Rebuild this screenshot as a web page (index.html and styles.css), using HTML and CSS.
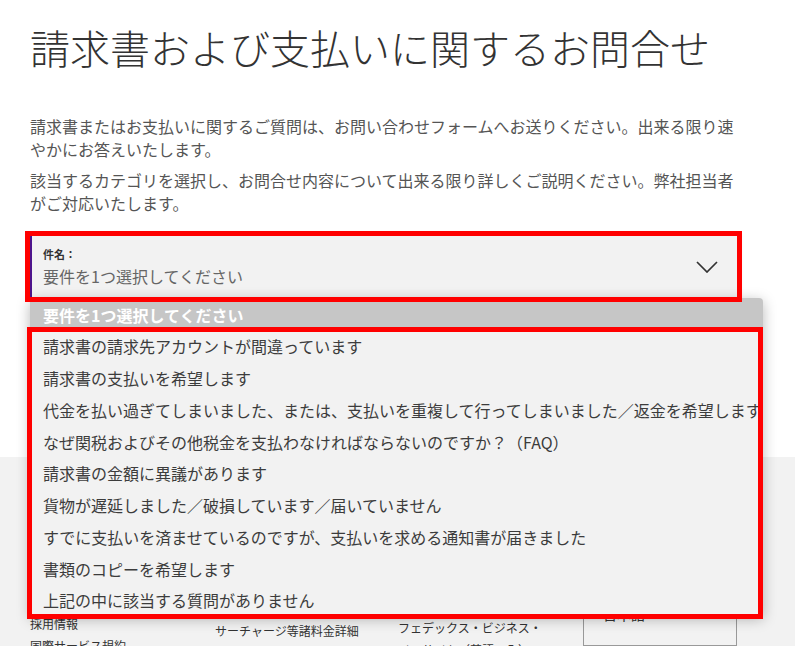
FILE: index.html
```html
<!DOCTYPE html>
<html lang="ja">
<head>
<meta charset="utf-8">
<title>請求書および支払いに関するお問合せ</title>
<link rel="stylesheet" href="styles.css">
</head>
<body>
<div class="page">
  <main class="main">
    <h1 class="title">請求書および支払いに関するお問合せ</h1>
    <p class="lead">請求書またはお支払いに関するご質問は、お問い合わせフォームへお送りください。出来る限り速やかにお答えいたします。</p>
    <p class="lead lead-second">該当するカテゴリを選択し、お問合せ内容について出来る限り詳しくご説明ください。弊社担当者がご対応いたします。</p>
    <div class="select">
      <div class="select-text">
        <div class="select-label">件名：</div>
        <div class="select-value">要件を1つ選択してください</div>
      </div>
      <svg class="chevron" width="22" height="12" viewBox="0 0 22 12" aria-hidden="true">
        <polyline points="1,1 11,11 21,1" fill="none" stroke="#333" stroke-width="1.7"/>
      </svg>
    </div>
  </main>

  <footer class="footer">
    <ul class="links">
      <li>当社について</li>
      <li>フェデックスについて</li>
      <li>企業情報</li>
      <li>ニュースルーム</li>
      <li>投資家情報</li>
      <li>お問い合わせ</li>
      <li>採用情報</li>
      <li>国際サービス規約</li>
    </ul>
    <ul class="links links-b">
      <li>その他の情報</li>
      <li>サービスガイド</li>
      <li>配送料金</li>
      <li>燃料サーチャージ</li>
      <li>関税・税金</li>
      <li>サーチャージ等諸料金詳細</li>
    </ul>
    <ul class="links links-c">
      <li>お役立ち情報</li>
      <li>ニュースレター</li>
      <li>ブログ</li>
      <li>イベント情報</li>
      <li>ダウンロード</li>
      <li class="wrap">フェデックス・ビジネス・インサイト（英語のみ）</li>
    </ul>
    <div class="lang-col">
      <div class="lang">日本語</div>
    </div>
  </footer>

  <ul class="listbox">
    <li class="is-active">要件を1つ選択してください</li>
    <li>請求書の請求先アカウントが間違っています</li>
    <li>請求書の支払いを希望します</li>
    <li>代金を払い過ぎてしまいました、または、支払いを重複して行ってしまいました／返金を希望します</li>
    <li>なぜ関税およびその他税金を支払わなければならないのですか？（FAQ）</li>
    <li>請求書の金額に異議があります</li>
    <li>貨物が遅延しました／破損しています／届いていません</li>
    <li>すでに支払いを済ませているのですが、支払いを求める通知書が届きました</li>
    <li>書類のコピーを希望します</li>
    <li>上記の中に該当する質問がありません</li>
  </ul>

  <div class="mark mark-select"></div>
  <div class="mark mark-options"></div>
</div>
</body>
</html>
```

FILE: styles.css
```css
html, body {
  margin: 0;
  padding: 0;
  background: #ffffff;
}

body {
  font-family: "Noto Sans CJK JP", "Noto Sans", sans-serif;
  color: #333333;
  overflow: hidden;
}

.page {
  position: relative;
  width: 795px;
  height: 646px;
  overflow: hidden;
}

.main {
  padding: 23px 0 159px 30px;
  width: 710px;
}

.title {
  margin: 0;
  font-size: 40px;
  line-height: 48px;
  font-weight: 300;
  color: #333333;
  white-space: nowrap;
}

.lead {
  margin: 44px 0 0;
  font-size: 16px;
  line-height: 23px;
  color: #555555;
}

.lead-second {
  margin-top: 8px;
}

.select {
  margin-top: 17px;
  height: 66px;
  box-sizing: border-box;
  display: flex;
  align-items: flex-start;
  justify-content: space-between;
  padding: 15px 22px 0 11px;
  background: #f2f2f2;
  border-left: 2px solid #4d148c;
  box-shadow: 0 2px 4px rgba(0, 0, 0, 0.12);
}

.select-label {
  font-size: 11px;
  line-height: 14px;
  font-weight: 700;
  color: #333333;
}

.select-value {
  margin-top: 4px;
  font-size: 16px;
  line-height: 22px;
  color: #666666;
}

.chevron {
  margin-top: 14px;
  display: block;
}

.footer {
  height: 189px;
  box-sizing: border-box;
  background: #f2f2f2;
  padding: 24px 30px 0;
  display: grid;
  grid-template-columns: 185px 183px 185px 154px;
  align-items: start;
}

.links {
  margin: 0;
  padding: 0;
  list-style: none;
  font-size: 12px;
  line-height: 22px;
  color: #333333;
}

.links-b {
  padding-top: 29px;
}

.links-c {
  padding-top: 26px;
}

.links .wrap {
  max-width: 150px;
}

.lang-col {
  padding-top: 119px;
}

.lang {
  height: 46px;
  box-sizing: border-box;
  border: 1px solid #999999;
  padding: 3px 0 0 19px;
  font-size: 14px;
  line-height: 20px;
  color: #333333;
}

.listbox {
  position: absolute;
  left: 30px;
  top: 298px;
  width: 733px;
  margin: 0;
  padding: 0;
  list-style: none;
  background: #f2f2f2;
  border-radius: 4px 4px 0 0;
  box-shadow: 0 3px 14px rgba(0, 0, 0, 0.28);
  overflow: hidden;
}

.listbox li {
  box-sizing: border-box;
  height: 31.75px;
  padding: 1.5px 0 0 13px;
  line-height: 30.25px;
  font-size: 16px;
  color: #3c3c3c;
  white-space: nowrap;
}

.listbox li.is-active {
  background: #c6c6c6;
  color: #ffffff;
  font-weight: 700;
}

.mark {
  position: absolute;
  box-sizing: border-box;
  border: 5px solid #ff0000;
}

.mark-select {
  left: 25px;
  top: 231px;
  width: 717px;
  height: 71px;
}

.mark-options {
  left: 27px;
  top: 327px;
  width: 736px;
  height: 292px;
}
```
